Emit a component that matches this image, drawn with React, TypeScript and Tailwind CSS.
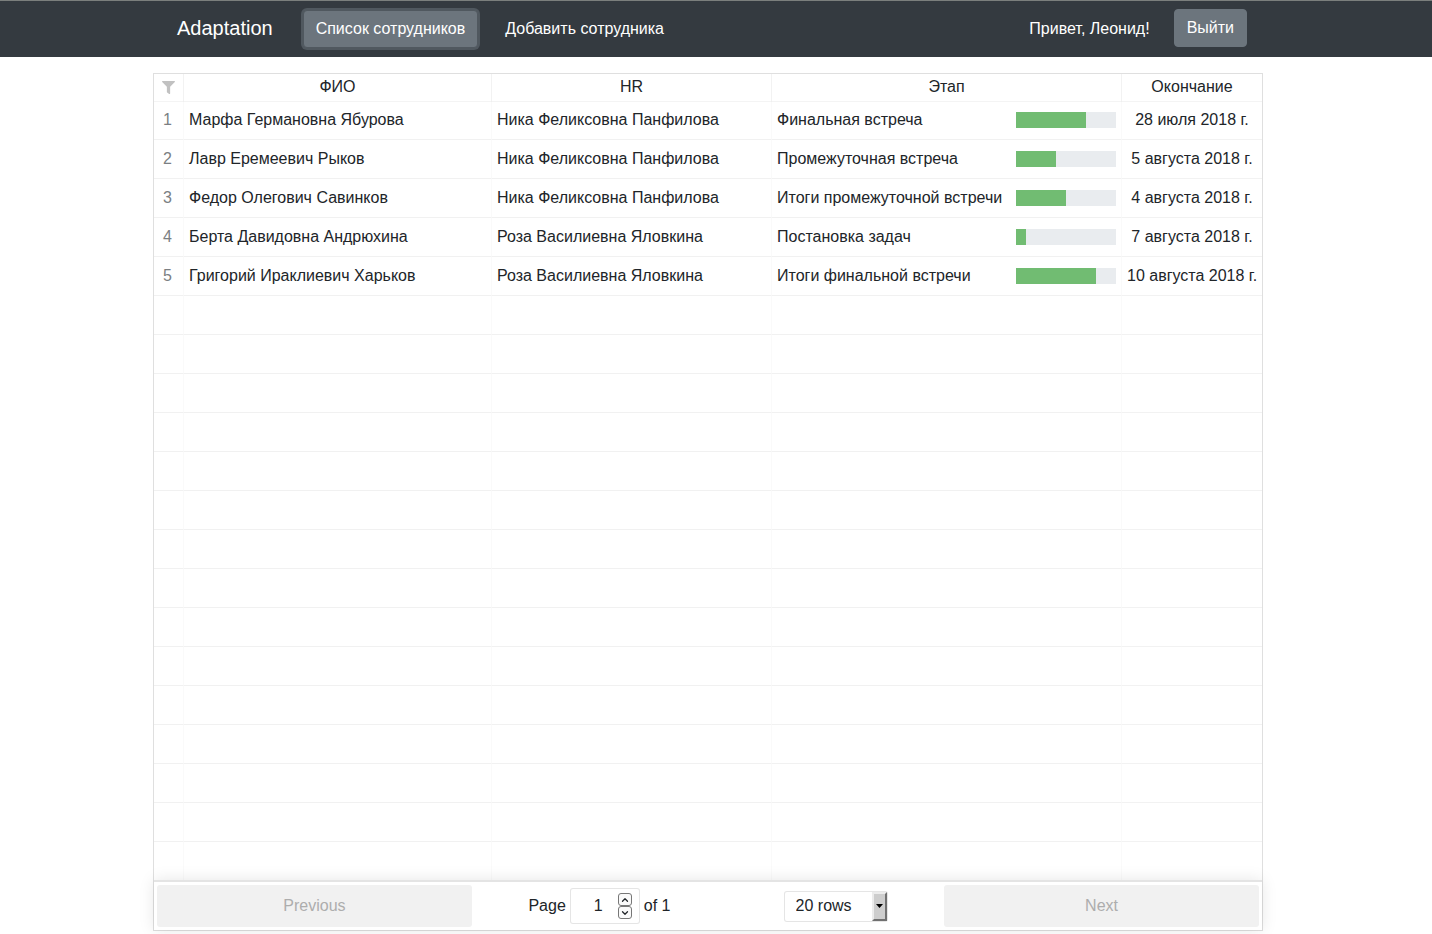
import { useState } from 'react'
import { FaFilter } from 'react-icons/fa'
import { ChevronDown, ChevronUp } from 'lucide-react'

type Employee = {
  name: string
  hr: string
  stage: string
  progress: number
  endDate: string
}

const employees: Employee[] = [
  { name: 'Марфа Германовна Ябурова', hr: 'Ника Феликсовна Панфилова', stage: 'Финальная встреча', progress: 70, endDate: '28 июля 2018 г.' },
  { name: 'Лавр Еремеевич Рыков', hr: 'Ника Феликсовна Панфилова', stage: 'Промежуточная встреча', progress: 40, endDate: '5 августа 2018 г.' },
  { name: 'Федор Олегович Савинков', hr: 'Ника Феликсовна Панфилова', stage: 'Итоги промежуточной встречи', progress: 50, endDate: '4 августа 2018 г.' },
  { name: 'Берта Давидовна Андрюхина', hr: 'Роза Василиевна Яловкина', stage: 'Постановка задач', progress: 10, endDate: '7 августа 2018 г.' },
  { name: 'Григорий Ираклиевич Харьков', hr: 'Роза Василиевна Яловкина', stage: 'Итоги финальной встречи', progress: 80, endDate: '10 августа 2018 г.' },
]

function Navbar() {
  return (
    <nav className="border-t border-[#7b7f7d] bg-[#343a40] py-2 pr-4 text-white">
      <div className="mx-auto flex h-10 w-full max-w-[1110px] items-center pr-4 pl-6">
        <a href="#" className="mr-[30px] pb-[2px] text-xl">
          Adaptation
        </a>
        <button
          type="button"
          className="h-[38px] rounded border border-[#50585f] bg-[#6c757d] px-3 ring-2 ring-[#50585f]"
        >
          Список сотрудников
        </button>
        <button type="button" className="ml-[14px] h-[38px] rounded border border-transparent px-3">
          Добавить сотрудника
        </button>
        <span className="mr-6 ml-auto">Привет, Леонид!</span>
        <button
          type="button"
          className="h-[38px] self-start rounded border border-[#6c757d] bg-[#6c757d] px-3"
        >
          Выйти
        </button>
      </div>
    </nav>
  )
}

function ProgressBar({ value, label }: { value: number; label: string }) {
  return (
    <div
      role="progressbar"
      aria-label={label}
      aria-valuenow={value}
      aria-valuemin={0}
      aria-valuemax={100}
      className="h-4 w-[100px] shrink-0 bg-[#e9ecef]"
    >
      <div className="h-full bg-[#71bc72]" style={{ width: `${value}%` }} />
    </div>
  )
}

function EmployeeRow({ index, employee }: { index: number; employee?: Employee }) {
  const cell = 'border-r border-black/[0.02] px-[5px] truncate'
  return (
    <tr className="h-[39px] *:border-b *:border-b-black/5 last:h-[38px] last:*:border-b-0">
      <td className="border-r border-black/[0.02] pr-[2px] text-center text-[#7b7f83]">{employee && index + 1}</td>
      <td className={cell}>{employee?.name}</td>
      <td className={cell}>{employee?.hr}</td>
      <td className={cell}>
        {employee && (
          <div className="flex items-center justify-between">
            <span>{employee.stage}</span>
            <ProgressBar value={employee.progress} label={employee.stage} />
          </div>
        )}
      </td>
      <td className="px-[5px] text-center whitespace-nowrap">{employee?.endDate}</td>
    </tr>
  )
}

function EmployeeTable({ pageSize }: { pageSize: number }) {
  const head = 'border-r border-black/5 pb-[2px] font-normal leading-6 shadow-[0_1px_0_#f4f4f4]'
  return (
    <table className="w-full table-fixed border-separate border-spacing-0">
      <colgroup>
        <col className="w-[30px]" />
        <col />
        <col className="w-[280px]" />
        <col className="w-[350px]" />
        <col className="w-[140px]" />
      </colgroup>
      <thead>
        <tr className="h-[27px]">
          <th className="border-r border-black/5 shadow-[0_1px_0_#f4f4f4]">
            <button type="button" aria-label="Фильтр" className="block w-full text-[#c1c1c1]">
              <FaFilter size={13} className="mx-auto" />
            </button>
          </th>
          <th className={head}>ФИО</th>
          <th className={head}>HR</th>
          <th className={head}>Этап</th>
          <th className="pb-[2px] leading-6 font-normal shadow-[0_1px_0_#f4f4f4]">Окончание</th>
        </tr>
      </thead>
      <tbody>
        {Array.from({ length: pageSize }, (_, i) => (
          <EmployeeRow key={i} index={i} employee={employees[i]} />
        ))}
      </tbody>
    </table>
  )
}

function PageJump() {
  const [page, setPage] = useState('1')
  const spin = 'flex h-[13px] w-[14px] items-center justify-center rounded-[3px] border border-[#777] bg-[#fafafa]'
  return (
    <div className="flex items-center">
      <label htmlFor="page">Page</label>
      <div className="mx-1 flex h-9 w-[70px] items-center rounded-[3px] border border-black/10 bg-white pr-[7px] pl-2">
        <input
          id="page"
          type="text"
          inputMode="numeric"
          value={page}
          onChange={(e) => setPage(e.target.value)}
          className="min-w-0 flex-1 text-center outline-none"
        />
        <div className="flex flex-col">
          <button type="button" aria-label="Next page number" className={spin}>
            <ChevronUp size={10} strokeWidth={3} />
          </button>
          <button type="button" aria-label="Previous page number" className={spin}>
            <ChevronDown size={10} strokeWidth={3} />
          </button>
        </div>
      </div>
      <span>of 1</span>
    </div>
  )
}

function PageSizeSelect({ value, onChange }: { value: number; onChange: (n: number) => void }) {
  return (
    <div className="relative">
      <select
        aria-label="Rows per page"
        value={value}
        onChange={(e) => onChange(Number(e.target.value))}
        className="h-[31px] w-[104px] appearance-none rounded-[3px] border border-black/10 bg-white pl-[11px] outline-none"
      >
        {[5, 10, 20, 25, 50, 100].map((n) => (
          <option key={n} value={n}>
            {n} rows
          </option>
        ))}
      </select>
      <span className="pointer-events-none absolute top-px right-px bottom-px flex w-[15px] items-center justify-center border-t-2 border-r-2 border-b-2 border-l-2 border-t-[#ececec] border-r-[#707070] border-b-[#707070] border-l-[#ececec] bg-[#cdcdcd]">
        <svg width="7" height="4" viewBox="0 0 7 4" className="shrink-0" aria-hidden="true">
          <path d="M0 0h7L3.5 4z" />
        </svg>
      </span>
    </div>
  )
}

function Pagination({ pageSize, onPageSize }: { pageSize: number; onPageSize: (n: number) => void }) {
  const button = 'h-[42px] w-full rounded-[3px] bg-[#f1f1f1] text-[#adadad]'
  return (
    <div className="relative flex items-center border-t-2 border-[#e4e4e4] bg-white p-[3px] shadow-[0_0_15px_0_rgba(0,0,0,0.1)]">
      <div className="flex-[2]">
        <button type="button" disabled className={button}>
          Previous
        </button>
      </div>
      <div className="flex flex-[3] items-center justify-around">
        <PageJump />
        <PageSizeSelect value={pageSize} onChange={onPageSize} />
      </div>
      <div className="flex-[2]">
        <button type="button" disabled className={button}>
          Next
        </button>
      </div>
    </div>
  )
}

export default function App() {
  const [pageSize, setPageSize] = useState(20)

  return (
    <div className="min-h-screen bg-white font-['Liberation_Sans',Arial,sans-serif] text-base text-[#212529]">
      <Navbar />
      <main className="pt-4 pr-4">
        <div className="mx-auto w-full max-w-[1110px] border border-[#dfdfdf]">
          <EmployeeTable pageSize={pageSize} />
          <Pagination pageSize={pageSize} onPageSize={setPageSize} />
        </div>
      </main>
    </div>
  )
}
